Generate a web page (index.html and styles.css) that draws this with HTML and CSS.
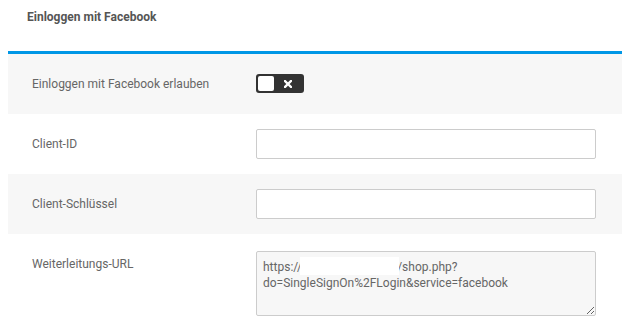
FILE: index.html
```html
<!DOCTYPE html>
<html lang="de">
<head>
    <meta charset="UTF-8">
    <title>Einloggen mit Facebook</title>
    <link rel="stylesheet" href="styles.css">
</head>
<body>
    <div class="panel">
        <h2 class="panel-title">Einloggen mit Facebook</h2>

        <div class="row shaded">
            <label class="row-label">Einloggen mit Facebook erlauben</label>
            <div class="row-field">
                <span class="toggle">
                    <span class="knob"></span>
                    <svg class="cross" width="8" height="8" viewBox="0 0 8 8">
                        <path d="M1 1L7 7M7 1L1 7" stroke="#fff" stroke-width="2.4" stroke-linecap="square"/>
                    </svg>
                </span>
            </div>
        </div>

        <div class="row">
            <label class="row-label" for="client-id">Client-ID</label>
            <div class="row-field"><input id="client-id" type="text"></div>
        </div>

        <div class="row shaded">
            <label class="row-label" for="client-secret">Client-Schlüssel</label>
            <div class="row-field"><input id="client-secret" type="text"></div>
        </div>

        <div class="row">
            <label class="row-label" for="redirect">Weiterleitungs-URL</label>
            <div class="row-field url-field">
                <textarea id="redirect" readonly>https://                                /shop.php?do=SingleSignOn%2FLogin&amp;service=facebook</textarea>
                <!-- redacted host -->
                <span class="redact"></span>
            </div>
        </div>
    </div>
</body>
</html>
```

FILE: styles.css
```css
body {
    margin: 0 0 0 8px;
    font-family: Roboto, "Liberation Sans", sans-serif;
    background-color: #fff;
}
.panel-title {
    margin: 0;
    height: 54px;
    line-height: 35px;
    padding-left: 19px;
    font-size: 12px;
    font-weight: bold;
    color: #555;
    border-bottom: 3px solid #0097e6;
    box-sizing: border-box;
}
.row {
    display: flex;
    align-items: flex-start;
    padding: 15px 26px 15px 24px;
}
.row.shaded {
    background-color: #f7f7f7;
}
.row-label {
    width: 224px;
    line-height: 30px;
    font-size: 12px;
    color: #666;
}
.row-field {
    flex: 1;
}
.url-field {
    position: relative;
    padding-top: 2px;
}
input, textarea {
    display: block;
    width: 100%;
    box-sizing: border-box;
    border: 1px solid #ccc;
    border-radius: 2px;
    background-color: #fff;
    font-family: Roboto, "Liberation Sans", sans-serif;
    font-size: 12px;
    color: #666;
}
input {
    height: 30px;
}
textarea {
    height: 65px;
    padding: 7px 6px;
    line-height: 16px;
    background-color: #f7f7f7;
    resize: vertical;
    white-space: pre-wrap;
}
.redact {
    position: absolute;
    left: 44px;
    top: 8px;
    width: 99px;
    height: 18px;
    background-color: #fff;
}
.toggle {
    display: inline-flex;
    align-items: center;
    margin-top: 5px;
    width: 48px;
    height: 19px;
    box-sizing: border-box;
    padding: 2px;
    background-color: #333;
    border-radius: 3px;
}
.knob {
    width: 16px;
    height: 15px;
    background-color: #fff;
    border-radius: 2px;
}
.cross {
    margin-left: 10px;
}
```
